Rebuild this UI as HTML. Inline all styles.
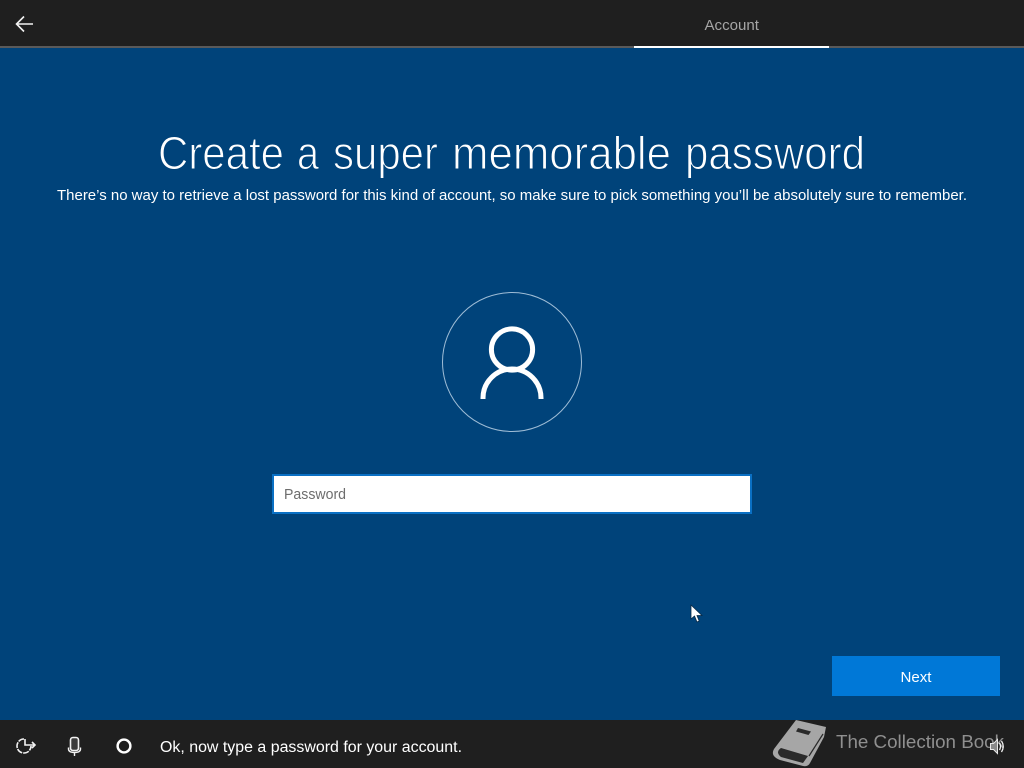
<!DOCTYPE html>
<html><head><meta charset="utf-8"><title>Account</title>
<style>
html,body{margin:0;padding:0;width:1024px;height:768px;overflow:hidden;background:#00437a}
svg{display:block}
text{font-family:"Liberation Sans",sans-serif}
.t{font-size:46px;fill:#fff;stroke:#00437a;stroke-width:1.1px}
</style></head>
<body>
<svg width="1024" height="768" viewBox="0 0 1024 768" xmlns="http://www.w3.org/2000/svg">
<rect width="1024" height="768" fill="#00437a"/>
<!-- top bar -->
<rect width="1024" height="46" fill="#1f1f1f"/>
<rect y="46" width="1024" height="2" fill="#5a5a5a"/>
<rect x="634" y="46" width="195" height="2" fill="#fff"/>
<path d="M33 24H16.5M24 16.5L16.5 24L24 31.5" fill="none" stroke="#f2f2f2" stroke-width="1.6"/>
<text x="704.5" y="30" font-size="15" fill="#a6a6a6" textLength="54.5" lengthAdjust="spacingAndGlyphs">Account</text>
<!-- heading -->
<text class="t" x="158" y="169" textLength="126" lengthAdjust="spacingAndGlyphs">Create</text>
<text class="t" x="297" y="169" textLength="22" lengthAdjust="spacingAndGlyphs">a</text>
<text class="t" x="333" y="169" textLength="105" lengthAdjust="spacingAndGlyphs">super</text>
<text class="t" x="452" y="169" textLength="219" lengthAdjust="spacingAndGlyphs">memorable</text>
<text class="t" x="685" y="169" textLength="180" lengthAdjust="spacingAndGlyphs">password</text>
<text x="57" y="200" font-size="15" fill="#fff" textLength="910" lengthAdjust="spacingAndGlyphs">There’s no way to retrieve a lost password for this kind of account, so make sure to pick something you’ll be absolutely sure to remember.</text>
<!-- avatar -->
<circle cx="512" cy="362" r="69.5" fill="none" stroke="#9fbdd6" stroke-width="1"/>
<circle cx="512" cy="349.5" r="20.6" fill="none" stroke="#fff" stroke-width="5"/>
<path d="M483 399V398A29 29 0 0 1 541 398V399" fill="none" stroke="#fff" stroke-width="5"/>
<!-- password -->
<rect x="273" y="475" width="478" height="38" fill="#fff" stroke="#0a70c4" stroke-width="2"/>
<text x="284" y="499" font-size="14.5" fill="#6d6d6d" textLength="62" lengthAdjust="spacingAndGlyphs">Password</text>
<!-- cursor -->
<path d="M691 605V619L694.5 616L697 622L699.2 621L697 615.5H702Z" fill="#fff" stroke="#0a2a45" stroke-width="0.8"/>
<!-- next -->
<rect x="832" y="656" width="168" height="40" fill="#0078d7"/>
<text x="900.5" y="682" font-size="15" fill="#fff" textLength="31" lengthAdjust="spacingAndGlyphs">Next</text>
<!-- bottom bar -->
<rect y="720" width="1024" height="48" fill="#1f1f1f"/>
<!-- ease of access -->
<g fill="none" stroke="#f2f2f2" stroke-width="1.6">
<path d="M24 739A7 7 0 1 0 31 746" stroke-dasharray="6 1"/>
<path d="M25 739V745H35M32 742L35 745L32 748"/>
</g>
<!-- mic -->
<rect x="70.5" y="737.5" width="8" height="13" rx="2.5" fill="#3c3c3c" stroke="#f2f2f2" stroke-width="1.6"/>
<path d="M68.5 747.5V749Q68.5 752.5 74.5 752.5Q80.5 752.5 80.5 749V747.5M74.5 752.5V756" fill="none" stroke="#f2f2f2" stroke-width="1.4"/>
<!-- cortana -->
<circle cx="124" cy="746" r="6.4" fill="none" stroke="#fff" stroke-width="2.4"/>
<text x="160" y="752" font-size="15.5" fill="#fff" textLength="302" lengthAdjust="spacingAndGlyphs">Ok, now type a password for your account.</text>
<!-- watermark -->
<path d="M796 720L826 727L824 737L810 763Q808 767 803 766L780 760Q770 756 774 749Z" fill="#a6a6a6"/>
<path d="M781 748L808 756L803 763L781 757Q775 752 781 748Z" fill="#2a2a2a"/>
<path d="M823 734L809 756" fill="none" stroke="#2a2a2a" stroke-width="1.2"/>
<path d="M798 728L811 731.5L808.5 735L796 731.5Z" fill="#2a2a2a"/>
<text x="836" y="748" font-size="18" fill="#8f8f8f" textLength="168" lengthAdjust="spacingAndGlyphs">The Collection Book</text>
<!-- speaker -->
<path d="M990.5 743.5H993.5L997.5 739.5V753.5L993.5 749.5H990.5Z" fill="#8a8a8a" stroke="#e8e8e8" stroke-width="1"/>
<path d="M999.5 743Q1001.5 746.5 999.5 750M1001.5 741Q1005 746.5 1001.5 752" fill="none" stroke="#f2f2f2" stroke-width="1.3"/>
</svg>
</body></html>
